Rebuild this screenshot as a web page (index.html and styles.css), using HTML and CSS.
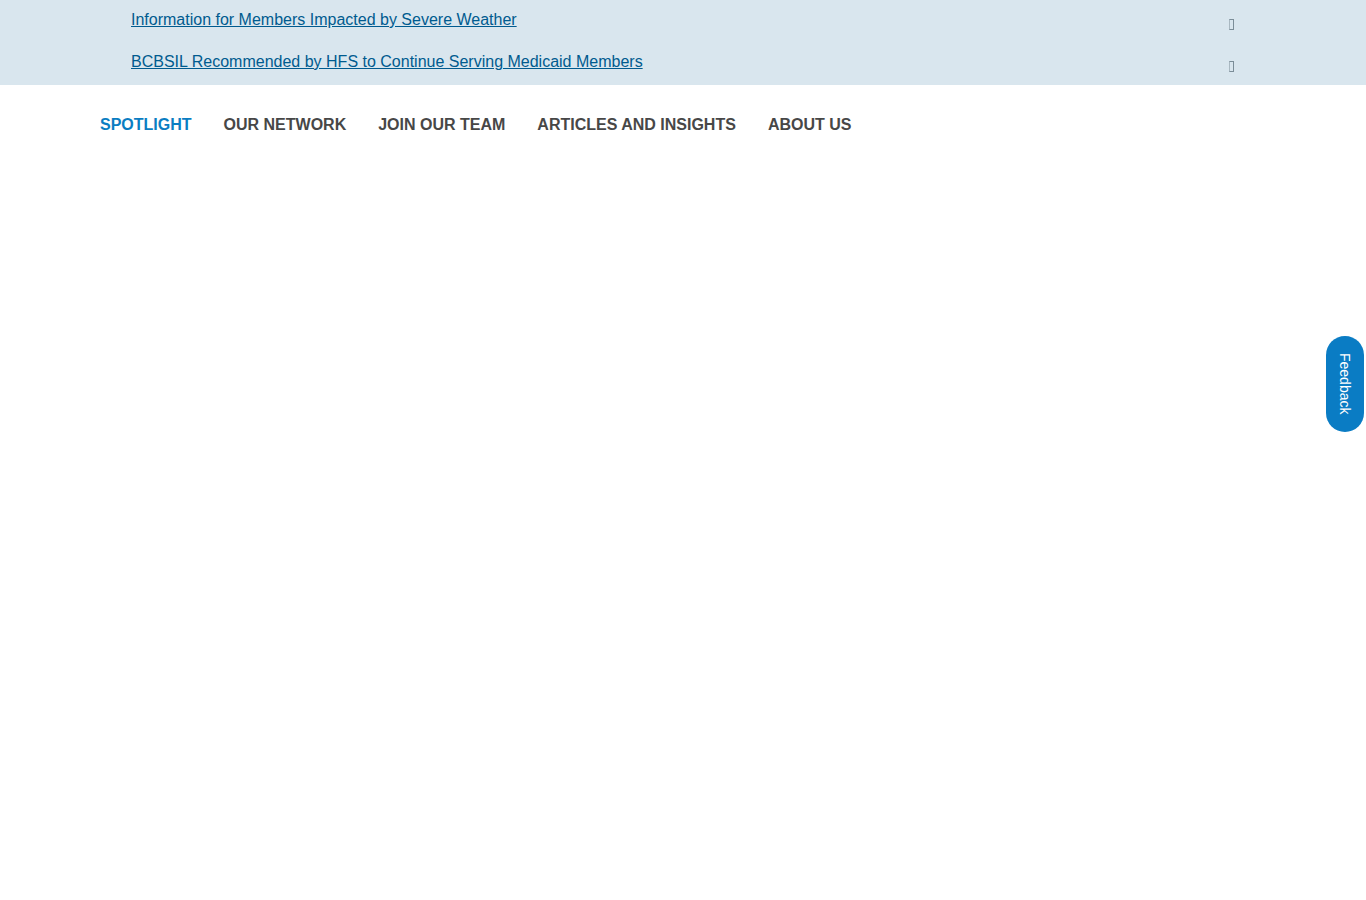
FILE: index.html
```html
<!DOCTYPE html>
<html lang="en">
<head>
    <meta charset="UTF-8">
    <meta name="viewport" content="width=device-width, initial-scale=1.0">
    <title>Spotlight</title>
    <link rel="stylesheet" href="styles.css">
</head>
<body>
    <div class="alerts">
        <ul class="alert-list">
            <li class="alert-item">
                <a href="#" class="alert-link">Information for Members Impacted by Severe Weather</a>
                <span class="alert-icon"></span>
            </li>
            <li class="alert-item">
                <a href="#" class="alert-link">BCBSIL Recommended by HFS to Continue Serving Medicaid Members</a>
                <span class="alert-icon"></span>
            </li>
        </ul>
    </div>

    <nav class="main-nav">
        <a href="#" class="nav-link active">Spotlight</a>
        <a href="#" class="nav-link">Our Network</a>
        <a href="#" class="nav-link">Join Our Team</a>
        <a href="#" class="nav-link">Articles and Insights</a>
        <a href="#" class="nav-link">About Us</a>
    </nav>

    <a href="#" class="feedback-tab">Feedback</a>
</body>
</html>
```

FILE: styles.css
```css
* {
    box-sizing: border-box;
    margin: 0;
    padding: 0;
}

body {
    font-family: "Liberation Sans", Arial, sans-serif;
    background: #fff;
    color: #444;
    min-height: 100vh;
}

.alerts {
    background-color: #d9e6ee;
    height: 85px;
}

.alert-list {
    list-style: none;
    margin: 0 132px 0 131px;
}

.alert-item {
    display: flex;
    justify-content: space-between;
    align-items: flex-start;
    height: 42px;
    padding-top: 11px;
    line-height: 18px;
}

.alert-link {
    color: #005b8f;
    font-size: 16px;
    text-decoration: underline;
}

/* empty glyph box from the icon font */
.alert-icon {
    width: 5px;
    height: 11px;
    margin-top: 8px;
    border: 1px solid #7b8d98;
    border-left-color: #a9b8c1;
}

.main-nav {
    display: flex;
    gap: 32px;
    padding: 31px 100px;
}

.nav-link {
    font-size: 16px;
    line-height: 18px;
    font-weight: 700;
    text-transform: uppercase;
    text-decoration: none;
    color: #474747;
}

.nav-link.active {
    color: #0a7dc2;
}

.feedback-tab {
    position: fixed;
    top: 336px;
    right: 2px;
    width: 38px;
    height: 96px;
    border-radius: 19px;
    background-color: #0a7cc4;
    color: #fff;
    font-size: 14px;
    text-decoration: none;
    writing-mode: vertical-rl;
    display: flex;
    align-items: center;
    justify-content: center;
}
```
